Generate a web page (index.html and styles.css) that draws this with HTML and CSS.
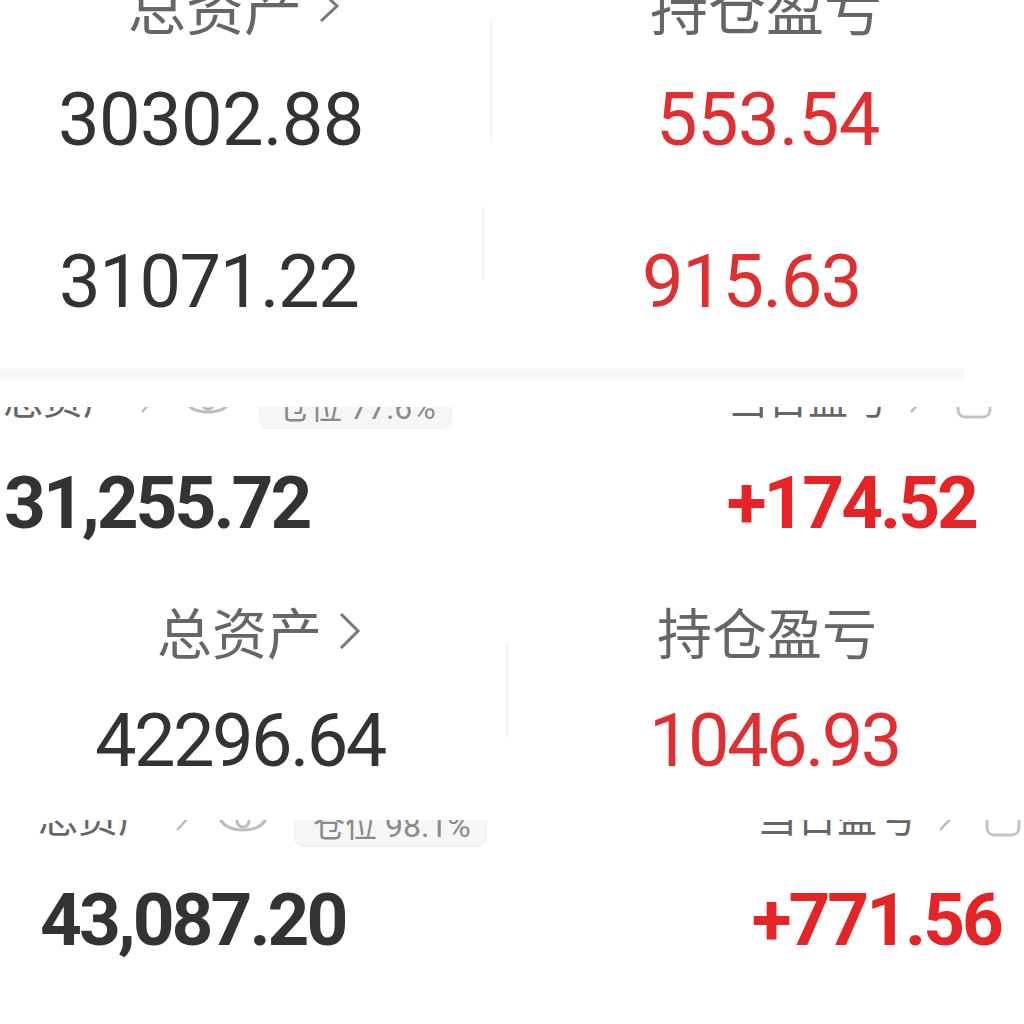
FILE: index.html
```html
<!DOCTYPE html>
<html lang="zh-CN">
<head>
  <meta charset="UTF-8" />
  <meta name="viewport" content="width=device-width, initial-scale=1.0"/>
  <title>资产截图</title>
  <link rel="stylesheet" href="styles.css">
</head>
<body>

  <!-- 第一张：总资产 / 持仓盈亏 两行 -->
  <div class="strip strip-a">
    <div class="group group-a1">
      <div class="col col-a1">
        <div class="lbl lbl-a lbl-a-left">总资产
          <svg class="chev" width="22" height="36" viewBox="0 0 22 36"><polyline points="3,3 19,18 3,33" fill="none" stroke="#777" stroke-width="3"/></svg>
        </div>
        <div class="num num-a num-a1-left">30302.88</div>
      </div>
      <div class="vline vline-a1"></div>
      <div class="col">
        <div class="lbl lbl-a lbl-a-right">持仓盈亏</div>
        <div class="num num-a red num-a1-right">553.54</div>
      </div>
    </div>
    <div class="group group-a2">
      <div class="col col-a2">
        <div class="num num-a2 num-a2-left">31071.22</div>
      </div>
      <div class="vline vline-a2"></div>
      <div class="col">
        <div class="num num-a2 red num-a2-right">915.63</div>
      </div>
    </div>
  </div>
  <div class="band"></div>

  <!-- 第二张：当日盈亏 -->
  <div class="strip strip-b">
    <div class="cut cut-b">
      <div class="labels labels-b">
        <div class="lgroup lgroup-b">
          <span class="lbl-s">总资产</span>
          <svg class="chev-s" width="20" height="36" viewBox="0 0 20 36"><polyline points="3,3 17,18 3,33" fill="none" stroke="#bbb" stroke-width="2.5"/></svg>
          <svg class="eye" width="50" height="32" viewBox="0 0 50 32">
            <path d="M3 16 C12 4 38 4 47 16 C38 28 12 28 3 16 Z" fill="none" stroke="#bdbdbd" stroke-width="3"/>
            <circle cx="25" cy="16" r="6" fill="none" stroke="#bdbdbd" stroke-width="3"/>
          </svg>
          <span class="pill">仓位 77.6%</span>
        </div>
        <div class="rgroup">
          <span class="lbl-s">当日盈亏</span>
          <svg class="chev-s chev-r" width="20" height="36" viewBox="0 0 20 36"><polyline points="3,3 17,18 3,33" fill="none" stroke="#bbb" stroke-width="2.5"/></svg>
          <svg class="box-icon" width="36" height="36" viewBox="0 0 36 36">
            <rect x="2" y="2" width="32" height="32" rx="7" fill="none" stroke="#c4c4c4" stroke-width="3"/>
          </svg>
        </div>
      </div>
    </div>
    <div class="bold-row bold-row-b">
      <span class="bnum">31,255.72</span>
      <span class="bnum red-b">+174.52</span>
    </div>
  </div>

  <!-- 第三张：总资产 / 持仓盈亏 -->
  <div class="strip strip-c">
    <div class="group">
      <div class="col col-c">
        <div class="lbl lbl-c lbl-c-left">总资产
          <svg class="chev" width="24" height="40" viewBox="0 0 24 40"><polyline points="3,3 20,20 3,37" fill="none" stroke="#777" stroke-width="3"/></svg>
        </div>
        <div class="num num-c num-c-left">42296.64</div>
      </div>
      <div class="vline vline-c"></div>
      <div class="col">
        <div class="lbl lbl-c lbl-c-right">持仓盈亏</div>
        <div class="num num-c red num-c-right">1046.93</div>
      </div>
    </div>
  </div>

  <!-- 第四张：当日盈亏 -->
  <div class="strip strip-d">
    <div class="cut cut-d">
      <div class="labels labels-d">
        <div class="lgroup lgroup-d">
          <span class="lbl-s">总资产</span>
          <svg class="chev-s" width="20" height="36" viewBox="0 0 20 36"><polyline points="3,3 17,18 3,33" fill="none" stroke="#bbb" stroke-width="2.5"/></svg>
          <svg class="eye" width="50" height="32" viewBox="0 0 50 32">
            <path d="M3 16 C12 4 38 4 47 16 C38 28 12 28 3 16 Z" fill="none" stroke="#bdbdbd" stroke-width="3"/>
            <circle cx="25" cy="16" r="6" fill="none" stroke="#bdbdbd" stroke-width="3"/>
          </svg>
          <span class="pill">仓位 98.1%</span>
        </div>
        <div class="rgroup">
          <span class="lbl-s">当日盈亏</span>
          <svg class="chev-s chev-r" width="20" height="36" viewBox="0 0 20 36"><polyline points="3,3 17,18 3,33" fill="none" stroke="#bbb" stroke-width="2.5"/></svg>
          <svg class="box-icon" width="36" height="36" viewBox="0 0 36 36">
            <rect x="2" y="2" width="32" height="32" rx="7" fill="none" stroke="#c4c4c4" stroke-width="3"/>
          </svg>
        </div>
      </div>
    </div>
    <div class="bold-row bold-row-d">
      <span class="bnum">43,087.20</span>
      <span class="bnum red-b">+771.56</span>
    </div>
  </div>

</body>
</html>
```

FILE: styles.css
```css
html, body {
  margin: 0;
  background: #fff;
}
body {
  width: 1024px;
  height: 1024px;
  overflow: hidden;
  font-family: Roboto, "Noto Sans CJK SC", sans-serif;
}
.strip {
  overflow: hidden;
  box-sizing: border-box;
}
.group {
  display: flex;
}
.col {
  display: flex;
  flex-direction: column;
  align-items: flex-start;
}
.vline {
  width: 2px;
  background: #f4f4f4;
}

/* 标签 */
.lbl {
  display: flex;
  align-items: center;
  font-family: "Noto Sans CJK SC", sans-serif;
  color: #666;
  white-space: nowrap;
}
.chev {
  margin-left: 16px;
}
.lbl-a {
  font-size: 58px;
  line-height: 57px;
}
.lbl-c {
  font-size: 55px;
  line-height: 55px;
}

/* 数字 */
.num {
  font-family: Roboto, sans-serif;
  font-size: 74px;
  line-height: 74px;
  color: #333;
  white-space: nowrap;
}
.num-a {
  letter-spacing: -0.6px;
}
.num-a2 {
  letter-spacing: -1.4px;
}
.num-c {
  letter-spacing: -2.6px;
}
.red {
  color: #de2f32;
}

/* 第一张 */
.strip-a {
  height: 368px;
}
.group-a1 {
  margin-top: -23px;
}
.col-a1 {
  width: 490px;
}
.lbl-a-left {
  margin-left: 128px;
}
.lbl-a-right {
  margin-left: 158px;
}
.num-a1-left {
  margin-top: 49px;
  margin-left: 58px;
}
.num-a1-right {
  margin-top: 49px;
  margin-left: 164px;
}
.vline-a1 {
  margin-top: 43px;
  height: 123px;
}
.group-a2 {
  margin-top: 50px;
}
.col-a2 {
  width: 482px;
}
.num-a2-left {
  margin-top: 38px;
  margin-left: 59px;
}
.num-a2-right {
  margin-top: 38px;
  margin-left: 158px;
}
.vline-a2 {
  height: 73px;
}
.band {
  width: 964px;
  height: 12px;
  background: linear-gradient(#fafafa, #f5f5f5 50%, #fbfbfb);
}

/* 小标签行（被截掉上半部分） */
.cut {
  overflow: hidden;
}
.labels {
  display: flex;
  align-items: flex-end;
  height: 48px;
}
.lgroup {
  display: flex;
  align-items: flex-end;
  box-sizing: border-box;
}
.rgroup {
  display: flex;
  align-items: flex-end;
}
.lbl-s {
  font-family: "Noto Sans CJK SC", sans-serif;
  font-size: 40px;
  line-height: 40px;
  color: #666;
  margin-bottom: 12px;
  white-space: nowrap;
}
.chev-s {
  margin-left: 16px;
  margin-bottom: 14px;
}
.chev-r {
  margin-left: 20px;
}
.eye {
  margin-left: 24px;
  margin-bottom: 10px;
}
.pill {
  display: flex;
  align-items: center;
  box-sizing: border-box;
  width: 193px;
  height: 48px;
  margin-left: 26px;
  padding-left: 18px;
  background: #f6f6f6;
  border: 1px solid #efefef;
  border-radius: 10px;
  font-family: Roboto, "Noto Sans CJK SC", sans-serif;
  font-size: 32px;
  color: #8a8a8a;
  white-space: nowrap;
}
.box-icon {
  margin-left: 28px;
  margin-bottom: 10px;
}

/* 粗体数字行 */
.bold-row {
  display: flex;
  justify-content: space-between;
  align-items: flex-start;
}
.bnum {
  font-family: Roboto, sans-serif;
  font-weight: 700;
  font-size: 73px;
  line-height: 73px;
  letter-spacing: -3px;
  color: #333;
  white-space: nowrap;
}
.red-b {
  color: #e52427;
}

/* 第二张 */
.strip-b {
  height: 220px;
}
.cut-b {
  margin-top: 27px;
  height: 33px;
}
.labels-b {
  margin-top: -26px;
}
.lgroup-b {
  width: 728px;
  padding-left: 3px;
}
.bold-row-b {
  margin-top: 27px;
  padding-left: 4px;
  padding-right: 48px;
}

/* 第三张 */
.strip-c {
  height: 190px;
}
.col-c {
  width: 506px;
}
.lbl-c-left {
  margin-top: 3px;
  margin-left: 157px;
}
.lbl-c-right {
  margin-top: 3px;
  margin-left: 149px;
}
.num-c-left {
  margin-top: 46px;
  margin-left: 95px;
}
.num-c-right {
  margin-top: 46px;
  margin-left: 141px;
}
.vline-c {
  margin-top: 43px;
  height: 94px;
}

/* 第四张 */
.strip-d {
  height: 234px;
}
.cut-d {
  margin-top: 30px;
  height: 28px;
}
.labels-d {
  margin-top: -21px;
}
.lgroup-d {
  width: 757px;
  padding-left: 38px;
}
.bold-row-d {
  margin-top: 36px;
  padding-left: 40px;
  padding-right: 23px;
}
```
